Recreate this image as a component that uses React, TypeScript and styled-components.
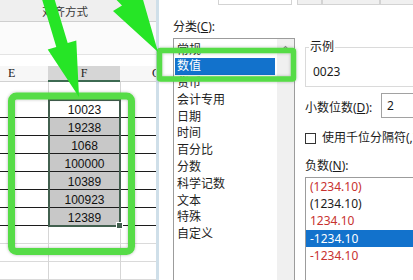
import React from 'react'
import styled, { createGlobalStyle, css } from 'styled-components'

const GlobalStyle = createGlobalStyle`
  html, body {
    margin: 0;
    padding: 0;
    background: #ffffff;
  }
`

const Page = styled.div`
  position: relative;
  width: 413px;
  height: 280px;
  overflow: hidden;
  display: flex;
  background: #ffffff;
  font-family: 'Noto Sans', 'Noto Sans CJK SC', sans-serif;
  color: #1b1b1b;
`

/* spreadsheet on the left */

const Sheet = styled.div`
  width: 156px;
  flex-shrink: 0;
  display: flex;
  flex-direction: column;
  overflow: hidden;
`

const Ribbon = styled.div`
  height: 22px;
  box-sizing: border-box;
  background: #efefef;
  border-bottom: 1px solid #cfcfcf;
  padding: 3px 0 0 42px;
  font-size: 11.5px;
  line-height: 18px;
  color: #3a3a3a;
  white-space: nowrap;
`

const FormulaArea = styled.div`
  height: 39px;
  box-sizing: border-box;
  background: #fbfbfb;
  border-bottom: 1px solid #e4e4e4;
  margin-bottom: 11px;
`

const HeaderRow = styled.div`
  display: grid;
  grid-template-columns: 48px 72px 1fr;
  height: 16px;
  background: #f7f7f7;
`

const HeaderCell = styled.div<{ $active?: boolean; $pad?: number }>`
  box-sizing: border-box;
  font-family: 'Liberation Serif', 'Noto Sans CJK SC', serif;
  font-size: 12px;
  line-height: 15px;
  border-bottom: 1px solid #d2d2d2;
  padding-left: ${({ $pad }) => ($pad ? `${$pad}px` : 0)};
  text-align: ${({ $pad }) => ($pad ? 'left' : 'center')};
  white-space: nowrap;
  overflow: hidden;
  color: #222;

  ${({ $active }) =>
    $active &&
    css`
      background: #d6d6d6;
      border-bottom: 2px solid #3d6a52;
    `}
`

const SheetBody = styled.div`
  display: grid;
  grid-template-columns: 48px 72px 1fr;
  flex: 1;
`

const Column = styled.div<{ $divider?: boolean }>`
  display: flex;
  flex-direction: column;
  box-sizing: border-box;
  border-left: ${({ $divider }) => ($divider ? '1px solid #d6d6d6' : 'none')};
`

const lineColors = {
  black: '#1c1c1c',
  grid: '#dadada',
  none: 'transparent'
}

type Line = keyof typeof lineColors

const Cell = styled.div<{ $line: Line }>`
  height: 18px;
  flex-shrink: 0;
  box-sizing: border-box;
  border-bottom: 1px solid ${({ $line }) => lineColors[$line]};
`

const Selection = styled.div`
  position: relative;
  display: flex;
  flex-direction: column;
  outline: 2px solid #42604f;
  outline-offset: -1px;
  z-index: 1;
`

const SelCell = styled.div<{ $active?: boolean }>`
  height: 18px;
  box-sizing: border-box;
  border-bottom: 1px solid #1c1c1c;
  background: ${({ $active }) => ($active ? '#ffffff' : '#c8c8c8')};
  font-family: 'Liberation Sans', Arial, sans-serif;
  font-size: 12px;
  line-height: 18px;
  padding-top: 1px;
  text-align: center;
  color: #111;
`

const FillHandle = styled.div`
  position: absolute;
  right: -3px;
  bottom: -3px;
  width: 5px;
  height: 5px;
  background: #42604f;
  border: 1px solid #ffffff;
`

/* format cells dialog on the right */

const Dialog = styled.div`
  flex: 1;
  min-width: 0;
  display: flex;
  flex-direction: column;
  border-left: 3px solid #cfdfe9;
  background: #ffffff;
  font-size: 12px;
`

const TabStrip = styled.div`
  height: 5px;
  display: flex;
  flex-shrink: 0;
`

const Tab = styled.div<{ $width: number; $active?: boolean; $gap?: number }>`
  width: ${({ $width }) => $width}px;
  margin-left: ${({ $gap }) => $gap ?? 0}px;
  flex-shrink: 0;
  box-sizing: border-box;
  border: 1px solid #d3d3d3;
  border-top: none;
  background: ${({ $active }) => ($active ? '#ffffff' : '#f0f0f0')};
`

const DialogBody = styled.div`
  flex: 1;
  display: flex;
  min-height: 0;
`

const CategoryPane = styled.div`
  width: 136px;
  flex-shrink: 0;
  box-sizing: border-box;
  padding-left: 14px;
  display: flex;
  flex-direction: column;
`

const FieldLabel = styled.div<{ $top: number }>`
  margin-top: ${({ $top }) => $top}px;
  line-height: 16px;
  white-space: nowrap;
  color: #1b1b1b;
`

const Key = styled.span`
  text-decoration: underline;
  text-underline-offset: 1px;
`

const ListBox = styled.div`
  margin-top: 3px;
  flex: 1;
  display: flex;
  border: 1px solid #9c9c9c;
  border-bottom: none;
`

const ListItems = styled.div`
  flex: 1;
  padding: 2.5px 2px 0 1px;
`

const ListItem = styled.div<{ $selected?: boolean }>`
  height: 16.8px;
  line-height: 16.8px;
  padding-left: 2px;
  white-space: nowrap;
  color: ${({ $selected }) => ($selected ? '#ffffff' : '#1e1e1e')};
  background: ${({ $selected }) => ($selected ? '#1272cc' : 'transparent')};
`

const Scrollbar = styled.div`
  width: 17px;
  background: #f0f0f0;
  display: flex;
  justify-content: center;
  padding-top: 6px;
  box-sizing: border-box;
`

const RightPane = styled.div`
  flex: 1;
  min-width: 0;
  padding-left: 10px;
  display: flex;
  flex-direction: column;
  white-space: nowrap;
`

const SampleGroup = styled.fieldset`
  margin: 35px 0 0 0;
  padding: 10px 0 6px 4px;
  min-width: 0;
  border: 1px solid #dadada;
  border-right: none;
`

const SampleLegend = styled.legend`
  padding: 0 1px;
  margin-left: -1px;
  line-height: 14px;
`

const SampleValue = styled.div`
  padding-left: 3px;
  line-height: 16px;
`

const DecimalRow = styled.div`
  margin-top: 6px;
  height: 25px;
  display: flex;
  align-items: center;
`

const DecimalLabel = styled.div`
  width: 76px;
  flex-shrink: 0;
  padding-top: 2px;
`

const NumberInput = styled.div`
  flex: 1;
  height: 25px;
  box-sizing: border-box;
  border: 1px solid #a2a2a2;
  border-right: none;
  padding-left: 5px;
  line-height: 23px;
`

const CheckRow = styled.div`
  margin-top: 13px;
  display: flex;
  align-items: center;
  gap: 6px;
  line-height: 14px;
`

const CheckBox = styled.div`
  width: 11px;
  height: 11px;
  flex-shrink: 0;
  box-sizing: border-box;
  border: 1px solid #333;
  background: #fff;
`

const NegList = styled.div`
  margin-top: 3px;
  flex: 1;
  border-top: 1px solid #9c9c9c;
  border-left: 1px solid #9c9c9c;
`

const NegItem = styled.div<{ $red?: boolean; $selected?: boolean }>`
  height: 17.2px;
  line-height: 17.2px;
  padding-left: 4px;
  color: ${({ $red, $selected }) => ($selected ? '#ffffff' : $red ? '#c8322f' : '#1b1b1b')};
  background: ${({ $selected }) => ($selected ? '#1272cc' : 'transparent')};
`

const Overlay = styled.svg`
  position: absolute;
  left: 0;
  top: 0;
  pointer-events: none;
  z-index: 5;
`

const numbers = ['10023', '19238', '1068', '100000', '10389', '100923', '12389']
const categories = ['常规', '数值', '货币', '会计专用', '日期', '时间', '百分比', '分数', '科学记数', '文本', '特殊', '自定义']
const negatives = [
  { text: '(1234.10)', red: true },
  { text: '(1234.10)' },
  { text: '1234.10', red: true },
  { text: '-1234.10', selected: true },
  { text: '-1234.10', red: true }
]

const sideLines: Line[] = ['none', 'black', 'black', 'black', 'black', 'black', 'black', 'black', 'grid', 'grid', 'grid']

const SideColumn = ({ divider }: { divider?: boolean }) => (
  <Column $divider={divider}>
    {sideLines.map((line, i) => (
      <Cell key={i} $line={line} />
    ))}
  </Column>
)

const App = () => {
  return (
    <Page>
      <GlobalStyle />
      <Sheet>
        <Ribbon>对齐方式</Ribbon>
        <FormulaArea />
        <HeaderRow>
          <HeaderCell $pad={8}>E</HeaderCell>
          <HeaderCell $active>F</HeaderCell>
          <HeaderCell $pad={32}>G</HeaderCell>
        </HeaderRow>
        <SheetBody>
          <SideColumn />
          <Column $divider>
            <Cell $line="none" />
            <Selection>
              {numbers.map((n, i) => (
                <SelCell key={n} $active={i === 0}>
                  {n}
                </SelCell>
              ))}
              <FillHandle />
            </Selection>
            <Cell $line="grid" />
            <Cell $line="grid" />
            <Cell $line="grid" />
          </Column>
          <SideColumn divider />
        </SheetBody>
      </Sheet>

      <Dialog>
        <TabStrip>
          <Tab $width={74} $gap={59} $active />
          <Tab $width={25} $gap={5} />
          <Tab $width={58} />
          <Tab $width={40} />
        </TabStrip>
        <DialogBody>
          <CategoryPane>
            <FieldLabel $top={14}>
              分类(<Key>C</Key>):
            </FieldLabel>
            <ListBox>
              <ListItems>
                {categories.map((c) => (
                  <ListItem key={c} $selected={c === '数值'}>
                    {c}
                  </ListItem>
                ))}
              </ListItems>
              <Scrollbar>
                <svg width="9" height="6" viewBox="0 0 9 6">
                  <path d="M1 5 L4.5 1.5 L8 5" fill="none" stroke="#8a8a8a" strokeWidth="1.2" />
                </svg>
              </Scrollbar>
            </ListBox>
          </CategoryPane>

          <RightPane>
            <SampleGroup>
              <SampleLegend>示例</SampleLegend>
              <SampleValue>0023</SampleValue>
            </SampleGroup>
            <DecimalRow>
              <DecimalLabel>
                小数位数(<Key>D</Key>):
              </DecimalLabel>
              <NumberInput>2</NumberInput>
            </DecimalRow>
            <CheckRow>
              <CheckBox />
              <span>
                使用千位分隔符(,)(<Key>U</Key>)
              </span>
            </CheckRow>
            <FieldLabel $top={13}>
              负数(<Key>N</Key>):
            </FieldLabel>
            <NegList>
              {negatives.map((n, i) => (
                <NegItem key={i} $red={n.red} $selected={n.selected}>
                  {n.text}
                </NegItem>
              ))}
            </NegList>
          </RightPane>
        </DialogBody>
      </Dialog>

      {/* green annotation marks drawn over the screenshot */}
      <Overlay width="413" height="280" viewBox="0 0 413 280">
        <defs>
          <filter id="glow" x="-20%" y="-20%" width="140%" height="140%">
            <feDropShadow dx="0" dy="0" stdDeviation="1.6" floodColor="#000" floodOpacity="0.28" />
          </filter>
        </defs>
        <rect x="11.5" y="96" width="120" height="155.5" rx="5" fill="none" stroke="#56dc46" strokeWidth="7" filter="url(#glow)" />
        <rect x="159.5" y="50.5" width="134" height="28.5" rx="1" fill="none" stroke="#56dc46" strokeWidth="5.5" filter="url(#glow)" />
        <polygon
          points="41.3,-3.1 56.3,46.9 47.7,49.6 79,97 76.3,40.4 67.7,43.1 52.7,-6.9"
          fill="#26e526"
        />
        <polygon
          points="111.4,-5.2 122,5.4 113,11 158,52 141.2,-6.6 132.2,-1 121.6,-11.6"
          fill="#26e526"
        />
      </Overlay>
    </Page>
  )
}

export default App
